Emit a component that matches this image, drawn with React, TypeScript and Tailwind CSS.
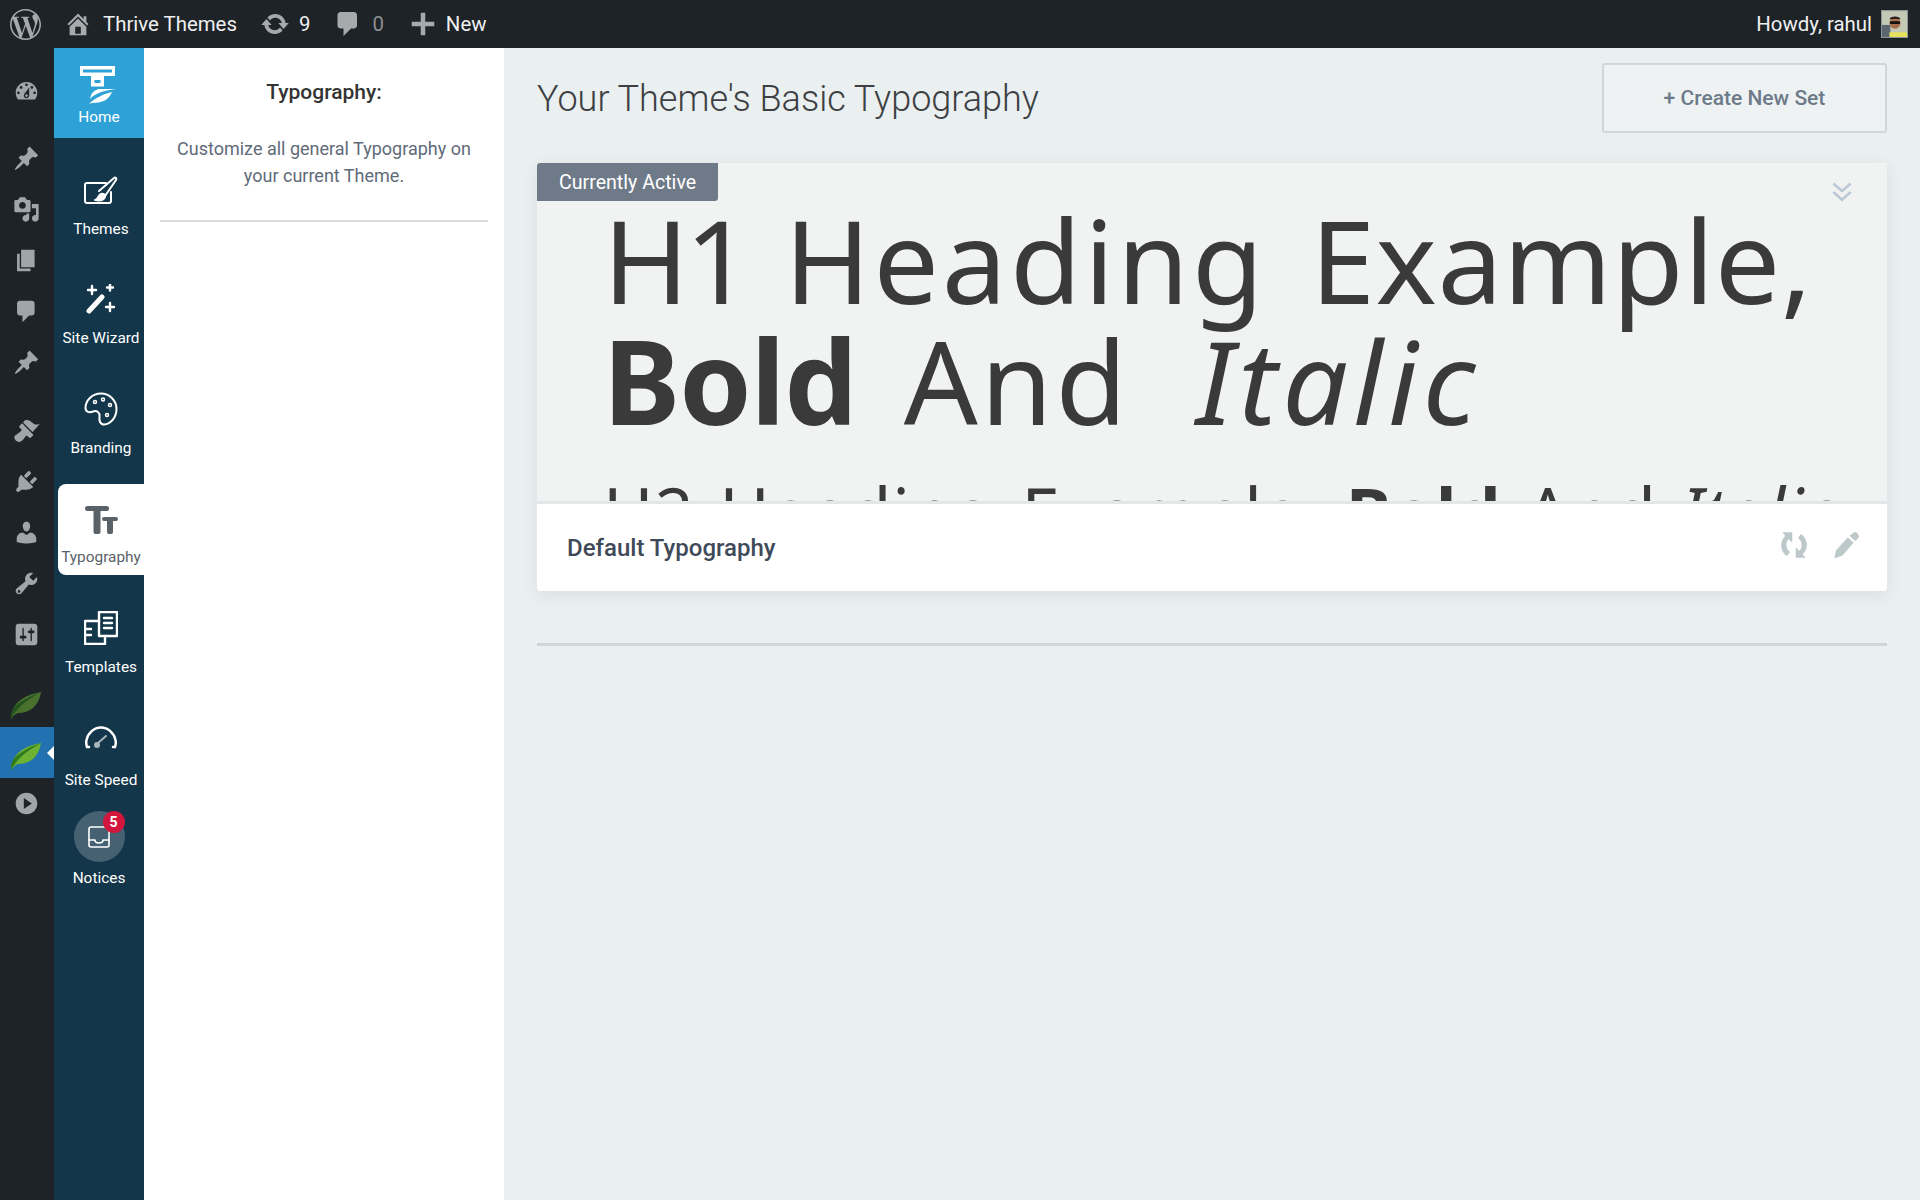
import React from "react";
import { SiWordpress } from "react-icons/si";

const P = {
  dashboard: "M3.76 16h12.48c1.1-1.37 1.76-3.11 1.76-5 0-4.42-3.58-8-8-8s-8 3.58-8 8c0 1.89.66 3.63 1.76 5zM10 4c.55 0 1 .45 1 1s-.45 1-1 1-1-.45-1-1 .45-1 1-1zM6 6c.55 0 1 .45 1 1s-.45 1-1 1-1-.45-1-1 .45-1 1-1zm8 0c.55 0 1 .45 1 1s-.45 1-1 1-1-.45-1-1 .45-1 1-1zm-5.37 5.55L12 7v6c0 1.1-.9 2-2 2s-2-.9-2-2c0-.57.24-1.08.63-1.45zM4 10c.55 0 1 .45 1 1s-.45 1-1 1-1-.45-1-1 .45-1 1-1zm12 0c.55 0 1 .45 1 1s-.45 1-1 1-1-.45-1-1 .45-1 1-1zm-5 3c0-.55-.45-1-1-1s-1 .45-1 1 .45 1 1 1 1-.45 1-1z",
  pin: "M10.44 3.02l1.82-1.82 6.36 6.35-1.83 1.82c-1.05-.68-2.48-.57-3.41.36l-.75.75c-.92.93-1.04 2.35-.35 3.41l-1.83 1.82-2.41-2.41-2.8 2.79c-.42.42-3.38 2.71-3.8 2.29s1.86-3.39 2.28-3.81l2.79-2.79L4.1 9.36l1.83-1.82c1.05.69 2.48.57 3.4-.36l.75-.75c.93-.92 1.05-2.35.36-3.41z",
  media: "M13 11V4c0-.55-.45-1-1-1h-1.67L9 1H5L3.67 3H2c-.55 0-1 .45-1 1v7c0 .55.45 1 1 1h10c.55 0 1-.45 1-1zM7 4.5c1.38 0 2.5 1.12 2.5 2.5S8.38 9.5 7 9.5 4.5 8.38 4.5 7 5.62 4.5 7 4.5zM14 6h5v10.5c0 1.38-1.12 2.5-2.5 2.5S14 17.88 14 16.5s1.12-2.5 2.5-2.5c.17 0 .34.02.5.05V9h-3V6zm-4 8.05V13h2v3.5c0 1.38-1.12 2.5-2.5 2.5S7 17.88 7 16.5 8.12 14 9.5 14c.17 0 .34.02.5.05z",
  page: "M6 15V2h10v13H6zm-1 1h8v2H3V5h2v11z",
  comment: "M5 2h9c1.1 0 2 .9 2 2v7c0 1.1-.9 2-2 2h-2l-5 5v-5H5c-1.1 0-2-.9-2-2V4c0-1.1.9-2 2-2z",
  brush: "M14.48 11.06L7.41 3.99l1.5-1.5c.5-.56 2.3-.47 3.51.32 1.21.8 1.43 1.28 2.91 2.1 1.18.64 2.45 1.26 4.67.01l-5.52 6.14zm-.71.71L6.7 4.7 4.93 6.47c-.39.39-.39 1.02 0 1.41l1.06 1.06c.39.39.39 1.03 0 1.42-.6.6-1.43 1.11-2.21 1.69-.35.26-.7.53-1.01.84C1.43 13.23 1 14.09 1 15c0 .91.43 1.77 1.06 2.4.63.63 1.49 1.06 2.4 1.06.91 0 1.77-.43 2.4-1.06.31-.31.58-.66.84-1.01.58-.78 1.09-1.61 1.69-2.21.39-.39 1.03-.39 1.42 0l1.06 1.06c.39.39 1.02.39 1.41 0l1.77-1.77-.28-.7z",
  plugin: "M13.11 4.36L9.87 7.6 8 5.73l3.24-3.24c.35-.34 1.05-.2 1.56.32.52.51.66 1.21.31 1.55zm-8 1.77l.91-1.12 9.01 9.01-1.19.84c-.71.71-2.63 1.16-3.82 1.16H6.14L4.9 17.26c-.59.59-1.54.59-2.12 0-.59-.58-.59-1.53 0-2.12l1.24-1.24v-3.88c0-1.13.4-3.18 1.09-3.89zm7.26 3.97l3.24-3.24c.34-.35 1.04-.21 1.55.31.52.51.66 1.21.31 1.55l-3.24 3.25z",
  users: "M10 9.25c-2.27 0-2.73-3.44-2.73-3.44C7 4.02 7.82 2 9.97 2c2.16 0 2.98 2.02 2.71 3.81 0 0-.41 3.44-2.68 3.44zm0 2.57L12.72 10c2.39 0 4.52 2.33 4.52 4.53v2.49s-3.65 1.13-7.24 1.13c-3.65 0-7.24-1.13-7.24-1.13v-2.49c0-2.25 1.94-4.48 4.47-4.48z",
  tools: "M16.68 9.77c-1.34 1.34-3.3 1.67-4.95.99l-5.41 6.52c-.99.99-2.59.99-3.58 0s-.99-2.59 0-3.57l6.52-5.42c-.68-1.65-.35-3.61.99-4.95 1.28-1.28 3.12-1.62 4.72-1.06l-2.89 2.89 2.82 2.82 2.86-2.87c.53 1.58.18 3.41-1.08 4.67zM3.81 16.58c.4.39 1.03.39 1.42 0 .39-.4.39-1.03 0-1.42-.39-.39-1.02-.39-1.42 0-.39.39-.39 1.02 0 1.42z",
  settings: "M18 16V4c0-1.1-.9-2-2-2H4c-1.1 0-2 .9-2 2v12c0 1.1.9 2 2 2h12c1.1 0 2-.9 2-2zM8 11h1c.55 0 1 .45 1 1s-.45 1-1 1H8v1.5c0 .28-.22.5-.5.5s-.5-.22-.5-.5V13H6c-.55 0-1-.45-1-1s.45-1 1-1h1V5.5c0-.28.22-.5.5-.5s.5.22.5.5V11zm5-2h-1c-.55 0-1-.45-1-1s.45-1 1-1h1V5.5c0-.28.22-.5.5-.5s.5.22.5.5V7h1c.55 0 1 .45 1 1s-.45 1-1 1h-1v5.5c0 .28-.22.5-.5.5s-.5-.22-.5-.5V9z",
  home: "M16 8.5l1.53 1.53-1.06 1.06L10 4.62l-6.47 6.47-1.06-1.06L10 2.5l4 4v-2h2v4zm-6-2.46l6 5.99V18H4v-5.97zM12 17v-5H8v5h4z",
  update: "M10.2 3.28c3.53 0 6.43 2.61 6.92 6h2.08l-3.5 4-3.5-4h2.32c-.45-1.97-2.21-3.44-4.32-3.44-1.45 0-2.73.71-3.54 1.78L4.95 5.66C6.23 4.2 8.11 3.28 10.2 3.28zm-.4 13.44c-3.52 0-6.43-2.61-6.92-6H.8l3.5-4c1.17 1.33 2.33 2.67 3.5 4H5.48c.45 1.97 2.21 3.44 4.32 3.44 1.45 0 2.73-.71 3.54-1.78l1.71 1.95c-1.28 1.46-3.15 2.39-5.25 2.39z",
  plus: "M8.5 2.5h3v6h6v3h-6v6h-3v-6h-6v-3h6z",
  play: "M10 2c4.42 0 8 3.58 8 8s-3.58 8-8 8-8-3.58-8-8 3.58-8 8-8zM8 14l6-4-6-4v8z",
};

function Dash({ d, size = 27, className = "" }: { d: string; size?: number; className?: string }) {
  return (
    <svg viewBox="0 0 20 20" width={size} height={size} fill="currentColor" fillRule="evenodd" className={className}>
      <path d={d} />
    </svg>
  );
}

function Leaf({ muted }: { muted?: boolean }) {
  return (
    <svg viewBox="0 0 32 28" width="32" height="28" className={"mt-[9px] " + (muted ? "opacity-55" : "")}>
      <path d="M1 27C1 12 13 3 31 0c-2 13-10 21-23 21-3 1-5 3-7 6z" fill="#6db233" />
      <path d="M1 27C6 17 16 8 31 0 23 3 8 9 3 17c-2 4-2 7-2 10z" fill="#2f7a1c" />
    </svg>
  );
}

function WpItem({ d, active, children }: { d?: string; active?: boolean; children?: React.ReactNode }) {
  return (
    <div className={"relative h-[51px] w-[54px] flex items-center justify-center pr-[2px] " + (active ? "bg-[#2271b1]" : "")}>
      {children ?? <Dash d={d as string} />}
      {active && (
        <span className="absolute right-0 top-1/2 -translate-y-1/2 border-y-[7px] border-y-transparent border-r-[7px] border-r-white" />
      )}
    </div>
  );
}

function NavItem({ label, pt, tile, children }: { label: string; pt: string; tile?: boolean; children: React.ReactNode }) {
  return (
    <div
      className={
        tile
          ? "mt-[16px] ml-[4px] h-[91px] flex flex-col items-center bg-white rounded-l-[8px] text-[#5a6268] pt-[19px]"
          : "h-[110px] flex flex-col items-center pl-[4px] text-white " + pt
      }
    >
      <div className="h-[36px] flex items-center justify-center">{children}</div>
      <div className={"leading-[20px] text-[15.4px] whitespace-nowrap " + (tile ? "mt-[8px]" : "mt-[11px]")}>{label}</div>
    </div>
  );
}

const strokeProps = { fill: "none", stroke: "currentColor", strokeWidth: 2, strokeLinecap: "round", strokeLinejoin: "round" } as const;

export default function App() {
  return (
    <div className="w-[1920px] h-[1200px] flex flex-col overflow-hidden bg-[#eaeff0] font-['Roboto',sans-serif]">
      {/* Admin bar */}
      <header className="h-[48px] shrink-0 bg-[#1d2327] flex items-center text-[20.4px] text-[#f0f0f1]">
        <div className="w-[54px] pl-[10px] text-[#a7aaad] shrink-0">
          <SiWordpress size={31} />
        </div>
        <Dash d={P.home} size={28} className="ml-[10px] text-[#a7aaad]" />
        <span className="ml-[11px]">Thrive Themes</span>
        <Dash d={P.update} size={30} className="ml-[23px] text-[#a7aaad]" />
        <span className="ml-[9px]">9</span>
        <Dash d={P.comment} size={30} className="ml-[23px] text-[#a7aaad]" />
        <span className="ml-[9px] text-[#8c8f94]">0</span>
        <Dash d={P.plus} size={30} className="ml-[24px] text-[#a7aaad]" />
        <span className="ml-[8px]">New</span>
        <span className="ml-auto">Howdy, rahul</span>
        <svg viewBox="0 0 27 28" width="27" height="28" className="ml-[9px] mr-[12px] border border-[#8d949a]">
          <rect width="27" height="28" fill="#c3c9b4" />
          <rect x="0" y="15" width="9" height="13" fill="#5c6670" />
          <rect x="8" y="23" width="19" height="5" fill="#e8e15a" />
          <circle cx="14" cy="13" r="6" fill="#a8704a" />
          <path d="M8 9c1-4 11-4 12 0-4-1-8-1-12 0z" fill="#231c18" />
          <rect x="8.500" y="11" width="11" height="3" rx="1" fill="#111" />
        </svg>
      </header>

      <div className="flex-1 flex min-h-0">
        {/* WP side menu */}
        <aside className="w-[54px] shrink-0 bg-[#1d2327] text-[#a0a5aa] pt-[18px]">
          <WpItem d={P.dashboard} />
          <div className="mt-[16px]">
            <WpItem d={P.pin} />
            <WpItem d={P.media} />
            <WpItem d={P.page} />
            <WpItem d={P.comment} />
            <WpItem d={P.pin} />
          </div>
          <div className="mt-[17px]">
            <WpItem d={P.brush} />
            <WpItem d={P.plugin} />
            <WpItem d={P.users} />
            <WpItem d={P.tools} />
            <WpItem d={P.settings} />
          </div>
          <div className="mt-[16px]">
            <WpItem><Leaf muted /></WpItem>
            <WpItem active><Leaf /></WpItem>
            <WpItem d={P.play} />
          </div>
        </aside>

        {/* Thrive nav */}
        <nav className="w-[90px] shrink-0 bg-[#13364a]">
          <div className="h-[90px] bg-[#2ea2d6] flex flex-col items-center text-white pt-[18px]">
            <svg viewBox="0 0 36 38" width="36" height="38" fill="currentColor" fillRule="evenodd" className="-ml-[3px]">
              <path d="M0 0h35v10H0zM3 3.500v3h29v-3z" />
              <path d="M11 10h13v10.500H11zM14.500 14v3h6v-3z" />
              <path d="M10 33c1-6 4-9 9-10h17c-8 1-20 3-26 10z" />
              <path d="M9 38c7-7 15-10 23-12-3 7-8 11-20 11z" />
            </svg>
            <div className="text-[15.4px] leading-[20px] mt-[3px]">Home</div>
          </div>
          <NavItem label="Themes" pt="pt-[34px]">
            <svg viewBox="0 0 34 28" width="34" height="28" {...strokeProps}>
              <path d="M22 7H3a2 2 0 0 0-2 2v16a2 2 0 0 0 2 2h22a2 2 0 0 0 2-2V16" />
              <path d="M21 20L32 4c1-2-1-3-2-2L15 15" />
              <path d="M11 24c3 0 3-5 6-6 2-1 5 1 4 3-1 3-5 4-10 3z" fill="currentColor" />
            </svg>
          </NavItem>
          <NavItem label="Site Wizard" pt="pt-[33px]">
            <svg viewBox="0 0 30 30" width="30" height="30" fill="none" stroke="currentColor" strokeLinecap="round">
              <path d="M3 27L16 13" strokeWidth="5" />
              <path d="M6 2v8M2 6h8M24 0.500v6M21 3.500h6M24 19v8M20 23h8" strokeWidth="2.400" />
            </svg>
          </NavItem>
          <NavItem label="Branding" pt="pt-[33px]">
            <svg viewBox="0 0 34 34" width="34" height="34" {...strokeProps}>
              <path d="M17 1.500C8 1.500 1.500 8.500 1.500 16c0 4 4 5 7.500 3.500 4-1.500 7 1 6.500 5-.5 4 .5 8 4.500 8C27 32 32.500 25 32.500 17S26 1.500 17 1.500z" />
              <circle cx="11" cy="10" r="1.500" strokeWidth="1.500" />
              <circle cx="19" cy="7.500" r="1.500" strokeWidth="1.500" />
              <circle cx="26" cy="13" r="1.500" strokeWidth="1.500" />
              <circle cx="23" cy="23" r="1.500" strokeWidth="1.500" />
            </svg>
          </NavItem>
          <NavItem label="Typography" pt="" tile>
            <svg viewBox="0 0 33 28" width="33" height="28" fill="#5a6268" className="-mt-[3px]">
              <rect x="0" y="0" width="24" height="5" rx="2.500" />
              <rect x="8.500" y="0" width="7" height="28" rx="2" />
              <rect x="17" y="11" width="16" height="4" rx="2" />
              <rect x="22" y="11" width="6" height="17" rx="2" />
            </svg>
          </NavItem>
          <NavItem label="Templates" pt="pt-[35px]">
            <svg viewBox="0 0 34 34" width="34" height="34" {...strokeProps} strokeWidth={2.400}>
              <path d="M15 1h18v24H15z" />
              <path d="M20 7h8M20 12h8M20 17h8" />
              <path d="M15 10H1v23h20v-8" />
              <path d="M1 18h6M1 24h6" />
            </svg>
          </NavItem>
          <NavItem label="Site Speed" pt="pt-[38px]">
            <svg viewBox="0 0 32 23" width="32" height="23" {...strokeProps} className="-mt-[8px]">
              <path d="M4 21H2c-1-3-1-5-.5-7C3 7 9 1.500 16 1.500S29 7 30.500 14c.5 2 .5 4-.5 7h-2" strokeWidth="2.500" />
              <path d="M13 17l8-7" stroke="#a8b4bb" strokeWidth="2" />
              <circle cx="12" cy="19" r="3" fill="#a8b4bb" stroke="none" />
            </svg>
          </NavItem>
          <div className="flex flex-col items-center text-white mt-[16px]">
            <div className="relative w-[51px] h-[51px] rounded-full bg-[#466272] flex items-center justify-center">
              <svg viewBox="0 0 22 22" width="22" height="22" {...strokeProps} strokeWidth={1.600}>
                <path d="M3 1h16a2 2 0 0 1 2 2v16a2 2 0 0 1-2 2H3a2 2 0 0 1-2-2V3a2 2 0 0 1 2-2z" />
                <path d="M1 14h6c0 2 2 3 4 3s4-1 4-3h6" />
              </svg>
              <span className="absolute right-0 top-0 w-[22px] h-[22px] rounded-full bg-[#d3163d] flex items-center justify-center text-[14px] font-bold">5</span>
            </div>
            <div className="text-[15.4px] leading-[20px] mt-[6px]">Notices</div>
          </div>
        </nav>

        {/* Help panel */}
        <section className="w-[360px] shrink-0 bg-white px-[16px] pt-[33px]">
          <div className="border-b-2 border-[#dcdcde] h-[141px] text-center">
            <h2 className="text-[21px] leading-[22px] font-medium text-[#333]">Typography:</h2>
            <p className="mt-[32px] text-[18px] leading-[27px] text-[#5f6b78]">
              Customize all general Typography on<br />your current Theme.
            </p>
          </div>
        </section>

        {/* Main */}
        <main className="flex-1 min-w-0 px-[33px]">
          <div className="flex items-start justify-between h-[115px] pt-[15px]">
            <h1 className="mt-[11px] text-[36px] font-light text-[#3c4043] leading-[50px]">Your Theme's Basic Typography</h1>
            <button className="w-[285px] h-[70px] pt-[2px] border-2 border-[#d0d7da] rounded-[3px] bg-[#eef2f3] text-[21px] font-medium text-[#6c7a89]">
              + Create New Set
            </button>
          </div>

          <div className="rounded-[3px] shadow-[0_4px_16px_rgba(60,80,90,0.09)] bg-white">
            <div className="relative h-[341px] bg-[#f1f3f3] border-b-[3px] border-[#e3e7ea] overflow-hidden">
              <div className="absolute left-0 top-0 h-[38px] w-[181px] pt-[2px] bg-[#6e7a87] rounded-br-[3px] rounded-tl-[3px] flex items-center pl-[22px] text-[19.6px] text-white">
                Currently Active
              </div>
              <svg viewBox="0 0 24 24" width="26" height="26" fill="none" stroke="#bcc8d4" strokeWidth="2.500" className="absolute right-[32px] top-[15px]">
                <path d="M4 5l8 7 8-7M4 13l8 7 8-7" />
              </svg>
              <div className="pl-[66px] pt-[36px] whitespace-nowrap text-[#3a3a3a] font-['Noto_Sans',sans-serif] font-normal">
                <div className="text-[116px] leading-[121px] tracking-[1px] [word-spacing:6px]">
                  <span className="tracking-[-4px]">H1</span> <span className="tracking-[3px]">Heading</span> <span className="ml-[7px] tracking-[0.6px]">Example,</span><br />
                  <b className="font-bold tracking-[-1px]">Bold</b> <span className="ml-[10px] tracking-[3px]">And</span> <i className="ml-[29px] tracking-[5px]">Italic</i>
                </div>
                <div className="text-[68.5px] leading-[80px] mt-[31px] tracking-[0.8px] [word-spacing:6px]">
                  H2 Heading Example, <b className="font-bold">Bold</b> And <i>Italic</i>
                </div>
              </div>
            </div>
            <div className="h-[87px] flex items-center px-[30px]">
              <span className="text-[24px] font-medium text-[#3f4a59]">Default Typography</span>
              <svg viewBox="0 0 24 24" width="28" height="28" fill="#bcc8ca" className="ml-auto -mt-[5px]">
                <path d="M1 12c0-3 1.500-6 3.500-8L2 1h8.500v9L7.500 7C6 8.500 5.500 10 5.500 12c0 2.500 1 4.500 3 6l-2.500 3.500C3 19.500 1 16 1 12z" />
                <path d="M23 12c0 3-1.500 6-3.500 8l2.500 3h-8.500v-9l3 3c1.500-1.500 2-3 2-5 0-2.500-1-4.500-3-6L18 2.500C21 4.500 23 8 23 12z" />
              </svg>
              <svg viewBox="0 0 24 24" width="28" height="28" fill="#bcc8ca" className="ml-[24px] -mr-[3px] -mt-[5px]">
                <path d="M19 1c1-.5 3.500 1 4 3 .2.8 0 1.500-.5 2l-2.500 2.500-5-4.500zM13.500 5.500l5 4.500L9 21l-7 2.500 1.500-7z" />
              </svg>
            </div>
          </div>

          <div className="mt-[52px] h-[3px] bg-[#cfd6d9]" />
        </main>
      </div>
    </div>
  );
}
